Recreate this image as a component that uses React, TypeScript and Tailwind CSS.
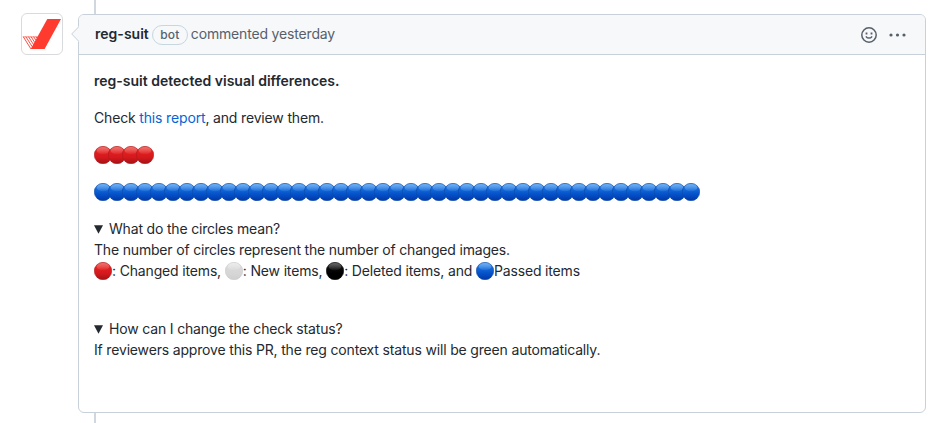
import React from "react";

type CircleColor = "red" | "white" | "black" | "blue";

const palette: Record<CircleColor, { stops: string[]; edge: string; shine: string }> = {
  red: { stops: ["#e23a38", "#df1c1e", "#d3191c", "#a31216"], edge: "#b01a1d", shine: "#f0706c" },
  white: { stops: ["#dedede", "#d8d8d8", "#d6d6d6", "#cfcfcf"], edge: "#cacaca", shine: "#ececec" },
  black: { stops: ["#2a2a2a", "#080808", "#000000", "#000000"], edge: "#0a0a0a", shine: "#666666" },
  blue: { stops: ["#3585e2", "#1064d6", "#0450c8", "#0238a6"], edge: "#0c4aa6", shine: "#70b0f4" },
};

function Circle({ color, className = "" }: { color: CircleColor; className?: string }) {
  const { stops, edge, shine } = palette[color];

  return (
    <svg viewBox="0 0 18 18" className={`inline-block h-[18px] w-[18px] shrink-0 ${className}`} aria-hidden="true">
      <defs>
        <linearGradient id={`fill-${color}`} x1="0" y1="0" x2="0" y2="1">
          <stop offset="0" stopColor={stops[0]} />
          <stop offset="0.4" stopColor={stops[1]} />
          <stop offset="0.65" stopColor={stops[2]} />
          <stop offset="1" stopColor={stops[3]} />
        </linearGradient>
        <linearGradient id={`shine-${color}`} x1="0" y1="0" x2="0" y2="1">
          <stop offset="0" stopColor={shine} />
          <stop offset="1" stopColor={shine} stopOpacity="0.1" />
        </linearGradient>
      </defs>
      <circle cx="9" cy="9" r="8.7" fill={`url(#fill-${color})`} stroke={edge} strokeWidth="0.6" />
      <ellipse cx="9" cy="4.6" rx="6.3" ry="3.7" fill={`url(#shine-${color})`} />
    </svg>
  );
}

function CircleRow({ color, count }: { color: CircleColor; count: number }) {
  return (
    <p className="mb-4 flex h-[21px] items-center">
      {Array.from({ length: count }, (_, i) => (
        <Circle key={i} color={color} className="-mr-1" />
      ))}
    </p>
  );
}

function Logo() {
  return (
    <svg viewBox="0 0 40 40" className="h-10 w-10" aria-hidden="true">
      <path d="M25.3 5H39L22.6 34.9H8.7Z" fill="#ff3b30" />
      <g stroke="#ff3b30" strokeWidth="0.9" fill="none">
        <path d="M1.2 22.6 8.9 34.9M3.8 22.6 10.3 32.8M6.4 22.6 11.6 30.7M9 22.6 12.8 28.6M11.6 22.6 14 26.5M14 22.6 15.2 24.4" />
        <path d="M1 22.9H15.8" strokeWidth="0.6" />
      </g>
    </svg>
  );
}

function Summary({ children }: { children: React.ReactNode }) {
  return (
    <summary className="flex list-none items-center">
      <svg viewBox="0 0 9 9" className="mt-px mr-[6px] h-[9px] w-[9px]" aria-hidden="true">
        <path d="M0 0.3H9L4.5 8.7Z" fill="#24292f" />
      </svg>
      {children}
    </summary>
  );
}

export default function App() {
  return (
    <div className="flex h-[423px] w-[936px] overflow-hidden bg-white pl-[21px] font-['Inter',sans-serif] text-sm leading-[21px] text-[#24292f]">
      <div className="mt-[13px] mr-[15px] h-[42px] w-[42px] shrink-0 overflow-hidden rounded-md border border-[#d8dadd]">
        <Logo />
      </div>

      <div className="flex w-[848px] flex-col">
        <div className="ml-4 h-[14px] w-0.5 shrink-0 bg-[#d0d7de]" />

        <article className="relative h-[399px] shrink-0 rounded-md border border-[#c8d1da]">
          <svg viewBox="0 0 8 16" className="absolute top-[11px] -left-2 h-4 w-2" aria-hidden="true">
            <path d="M8 0 0.5 8 8 16Z" fill="#f6f8fa" />
            <path d="M8 0.5 0.7 8 8 15.5" fill="none" stroke="#c8d1da" />
          </svg>

          <header className="flex h-10 items-center rounded-t-[5px] border-b border-[#c8d1da] bg-[#f6f8fa] pr-[19px] pb-0.5 pl-4">
            <strong className="font-semibold tracking-[0.02px]">reg-suit</strong>
            <span className="mt-[3px] ml-[3px] flex h-5 w-9 items-center justify-center rounded-full border border-[#c8d6df] text-xs font-medium tracking-[0.1px] text-[#57606a]">
              bot
            </span>
            <span className="ml-[3px] tracking-[-0.17px] text-[#57606a]">commented yesterday</span>
            <svg viewBox="0 0 16 16" className="mt-[3px] ml-auto h-4 w-4" fill="none" stroke="#57606a" strokeWidth="1.5" aria-hidden="true">
              <circle cx="8" cy="8" r="7.2" />
              <path d="M5.3 9.8C6.4 11.5 9.6 11.5 10.7 9.8" strokeLinecap="round" />
              <path d="M4.6 6.5H6.4M9.6 6.5H11.4" strokeWidth="1.8" />
            </svg>
            <svg viewBox="0 0 17 4" className="mt-0.5 ml-3 h-1 w-[17px]" fill="#57606a" aria-hidden="true">
              <circle cx="2" cy="2" r="1.6" />
              <circle cx="8.5" cy="2" r="1.6" />
              <circle cx="15" cy="2" r="1.6" />
            </svg>
          </header>

          <div className="px-[15px] pt-[15px]">
            <p className="mb-4 font-semibold">reg-suit detected visual differences.</p>
            <p className="mb-4 tracking-[-0.16px]">
              Check <a className="text-[#0366d6]">this report</a>, and review them.
            </p>

            <CircleRow color="red" count={4} />
            <CircleRow color="blue" count={43} />

            <details open className="mb-[37px] tracking-[-0.18px]">
              <Summary>What do the circles mean?</Summary>
              <p>The number of circles represent the number of changed images.</p>
              <p className="flex h-[21px] items-center tracking-[-0.16px] whitespace-pre">
                <Circle color="red" />
                {": Changed items, "}
                <Circle color="white" />
                {": New items, "}
                <Circle color="black" />
                {": Deleted items, and "}
                <Circle color="blue" />
                Passed items
              </p>
            </details>

            <details open className="tracking-[-0.17px]">
              <Summary>How can I change the check status?</Summary>
              <p>If reviewers approve this PR, the reg context status will be green automatically.</p>
            </details>
          </div>
        </article>

        <div className="ml-4 w-0.5 grow bg-[#d0d7de]" />
      </div>
    </div>
  );
}
